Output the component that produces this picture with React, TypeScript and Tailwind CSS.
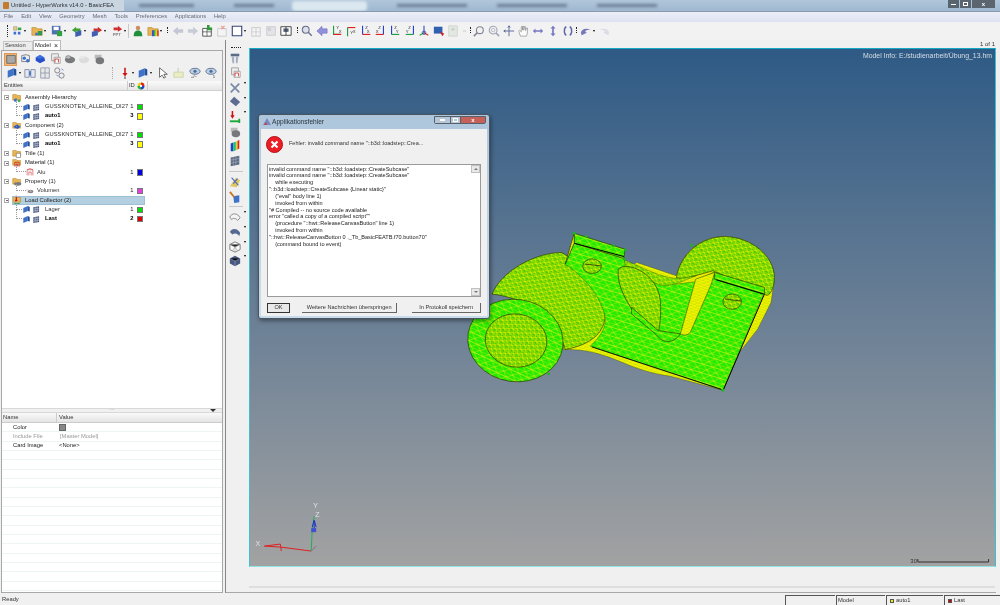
import type { ReactNode } from "react";

const shapes: Record<string, ReactNode> = {
  cube: (<><path d="M2 4.5 9 1.5v8L2 12.5z" fill="#3f72c8" /><path d="M9 1.5l3 1.5v7l-3-.5z" fill="#234f9c" /></>),
  mesh: (<><path d="M2 3.5 11 2v9l-9 1.5z" fill="#46557c" /><path d="M5 3v9M8 2.5v9M2 6.5l9-1.5M2 9.5l9-1.5" stroke="#d5dcec" strokeWidth=".8" /></>),
  asm: (<><path d="M1 2h5l1 1.5h5V10H1z" fill="#e9b452" stroke="#a87818" strokeWidth=".6" /><circle cx="5" cy="10" r="2.2" fill="#3a6fd0" /><circle cx="10" cy="11" r="2" fill="#37b04a" /></>),
  comp: (<><path d="M1 2h5l1 1.5h5V10H1z" fill="#e9b452" stroke="#a87818" strokeWidth=".6" /><path d="M2 8l5-3 5 3-5 3.5z" fill="#2958c8" /></>),
  title: (<><path d="M1 2h5l1 1.5h5V10H1z" fill="#e9b452" stroke="#a87818" strokeWidth=".6" /><path d="M6 6h6v6H6z" fill="#fff" stroke="#555" strokeWidth=".7" /></>),
  mat: (<><path d="M1 2h5l1 1.5h5V10H1z" fill="#e9b452" stroke="#a87818" strokeWidth=".6" /><path d="M4 12V6h6v6M6 12V9h2v3" fill="none" stroke="#c82020" strokeWidth="1.1" /></>),
  prop: (<><path d="M1 2h5l1 1.5h5V10H1z" fill="#e9b452" stroke="#a87818" strokeWidth=".6" /><ellipse cx="8" cy="9.5" rx="5" ry="2.6" fill="#77787c" /></>),
  load: (<><path d="M1 2h5l1 1.5h5V10H1z" fill="#e9b452" stroke="#a87818" strokeWidth=".6" /><path d="M6 1v8" stroke="#d00000" strokeWidth="1.6" /><path d="M4 7h4l-2 3z" fill="#d00000" /><path d="M3 12h8" stroke="#11a030" strokeWidth="1.2" /></>),
  alu: (<path d="M2 13V3h10v10M5 13V7h4v6M2 3l5-2 5 2" fill="none" stroke="#d04040" strokeWidth="1.1" />),
  vol: (<><ellipse cx="8" cy="8" rx="5" ry="3" fill="#808285" /><ellipse cx="8" cy="7" rx="2" ry="1" fill="#ddd" /><path d="M1 5h3M2 9h2" stroke="#c03030" strokeDasharray="1 1" /></>),
  wheel: (<><circle cx="7" cy="7" r="6" fill="#e0d020" /><path d="M7 7V1a6 6 0 0 1 6 6z" fill="#e02020" /><path d="M7 7h6a6 6 0 0 1-6 6z" fill="#2040e0" /><path d="M7 7v6a6 6 0 0 1-6-6z" fill="#20b040" /><circle cx="7" cy="7" r="2" fill="#fff" /></>),
  asmTool: (<><path d="M3 2h4v4H3z" fill="#e8d080" stroke="#777" strokeWidth=".5" /><path d="M3 8h3v3H3zM8 8h3v3H8z" fill="#3a6fd0" /><path d="M8 3h4v3H8z" fill="#35a84a" /></>),
  openTool: (<><path d="M1 3h5l1 1.5h6V12H1z" fill="#e9b452" stroke="#a87818" strokeWidth=".6" /><path d="M8 7h5v5H8z" fill="#2e9a4a" /><path d="M5 9h3v3H5z" fill="#3a6fd0" /></>),
  saveTool: (<><path d="M1 1h10v10H1z" fill="#4f6fb0" /><path d="M3 2h6v4H3z" fill="#fff" /><path d="M7 7h6v6H7z" fill="#30a040" /></>),
  arrowG: (<><path d="M1 6l5-4v2h5v3H6v2z" fill="#40a030" /><path d="M5 8l7-2v6l-7 2z" fill="#3f5fb0" /></>),
  arrowR: (<><path d="M13 6 8 2v2H3v3h5v2z" fill="#d03030" /><path d="M1 8l7-2v6l-7 2z" fill="#3f5fb0" /></>),
  ppt: (<><path d="M13 5 8 1v2H3v3h5v2z" fill="#d03030" /><text x="2" y="13" fontSize="5" fill="#444">PPT</text></>),
  user: (<><circle cx="7" cy="3.5" r="2.6" fill="#c89060" /><path d="M2 13c0-5 2-6.500 5-6.500s5 1.500 5 6.500z" fill="#1f8f3a" /></>),
  rainbow: (<><path d="M1 3h5l1 1.500h6V12H1z" fill="#e9b452" stroke="#a87818" strokeWidth=".6" /><path d="M6 6h2v7H6z" fill="#2040e0" /><path d="M8 6h2v7H8z" fill="#20c040" /><path d="M10 6h2v7h-2z" fill="#e8d020" /><path d="M12 6h1.500v7H12z" fill="#e02020" /></>),
  left: (<path d="M1 7l6-5v3h6v4H7v3z" fill="#c4c8d4" />),
  right: (<path d="M13 7 7 2v3H1v4h6v3z" fill="#c8ccd6" />),
  plusBox: (<><path d="M2 4h10v9H2z" fill="#fff" stroke="#444" /><path d="M7 4v9M2 8h10" stroke="#444" strokeWidth=".8" /><path d="M7 0h3v3h3v3H7z" fill="#2e9a38" /></>),
  grayBox: (<><path d="M2 3h10v10H2z" fill="#f2f2f2" stroke="#c8c8cc" /><path d="M7 3v10M2 8h10" stroke="#d0d0d4" /></>),
  redBox: (<><path d="M2 4h10v9H2z" fill="#f4f4f4" stroke="#c8c8cc" /><path d="M6 1l4 4M10 1 6 5" stroke="#e8a0a0" strokeWidth="1.400" /></>),
  white: (<path d="M1.500 1.500h11v11h-11z" fill="#fff" stroke="#39447a" strokeWidth="1.300" />),
  paneG: (<><path d="M2 2h10v10H2z" fill="#e4e4e8" stroke="#c8c8cc" /><path d="M3 3h4v4H3z" fill="#d0d0d4" /></>),
  book: (<><path d="M1 2h12v10H1z" fill="#fff" stroke="#333" /><path d="M4 4h6v4H4z" fill="#54607c" /><path d="M7 2v10" stroke="#333" /></>),
  zoomG: (<><circle cx="5.500" cy="5.500" r="4" fill="#dce0ea" stroke="#66708c" strokeWidth="1.200" /><path d="M8.500 8.500l4 4" stroke="#66708c" strokeWidth="1.600" /></>),
  purple: (<path d="M1 7l6-5.500v3h6v5H7v3z" fill="#9090dd" stroke="#6868b0" strokeWidth=".6" />),
  axGX: (<><path d="M3 1v10h8" fill="none" stroke="#1ca040" strokeWidth="1.300" /><path d="M3 11h9" stroke="#e02020" strokeWidth="1.300" /><text x="6" y="5" fontSize="5" fill="#333">Y</text><text x="9" y="9" fontSize="5" fill="#333">X</text></>),
  axRG: (<><path d="M3 3h9" stroke="#e02020" strokeWidth="1.300" /><path d="M3 3v10" stroke="#1ca040" strokeWidth="1.300" /><text x="6" y="10" fontSize="5" fill="#333">Y</text><text x="9" y="9" fontSize="5" fill="#333">X</text></>),
  axBR: (<><path d="M3 1v10" stroke="#2040e0" strokeWidth="1.300" /><path d="M3 11h9" stroke="#e02020" strokeWidth="1.300" /><text x="6" y="5" fontSize="5" fill="#333">Z</text><text x="8" y="9" fontSize="5" fill="#333">X</text></>),
  axRB: (<><path d="M11 1v10" stroke="#2040e0" strokeWidth="1.300" /><path d="M2 11h9" stroke="#e02020" strokeWidth="1.300" /><text x="5" y="5" fontSize="5" fill="#333">Z</text><text x="2" y="9" fontSize="5" fill="#333">X</text></>),
  axBG: (<><path d="M3 1v10" stroke="#2040e0" strokeWidth="1.300" /><path d="M3 11h9" stroke="#1ca040" strokeWidth="1.300" /><text x="6" y="5" fontSize="5" fill="#333">Z</text><text x="8" y="9" fontSize="5" fill="#333">Y</text></>),
  axGB: (<><path d="M11 1v10" stroke="#2040e0" strokeWidth="1.300" /><path d="M2 11h9" stroke="#1ca040" strokeWidth="1.300" /><text x="5" y="5" fontSize="5" fill="#333">Z</text><text x="2" y="9" fontSize="5" fill="#333">Y</text></>),
  triad: (<><path d="M7 1v9" stroke="#2040c0" strokeWidth="1.200" /><path d="M7 9 2 12" stroke="#1ca040" strokeWidth="1.200" /><path d="M7 9l5 3" stroke="#e02020" strokeWidth="1.200" /><circle cx="7" cy="9" r="2" fill="none" stroke="#3050a0" /></>),
  screen: (<><path d="M1 2h10v8H1z" fill="#3060b0" /><path d="M8 8l5 2-2 3z" fill="#d02020" /></>),
  personG: (<><path d="M2 1h10v12H2z" fill="#e4e8e4" stroke="#cfd2cf" /><circle cx="7" cy="5" r="2" fill="#c8d8c8" /></>),
  magCross: (<><circle cx="8" cy="6" r="4" fill="#f2f2f2" stroke="#808494" strokeWidth="1.300" /><path d="M5 9l-4 4" stroke="#808494" strokeWidth="1.800" /></>),
  magCross2: (<><circle cx="6" cy="6" r="4.500" fill="#f2f2f2" stroke="#a0a4b4" strokeWidth="1.300" /><circle cx="6" cy="6" r="2" fill="none" stroke="#b0b4c0" /><path d="M9 9l4 4" stroke="#a0a4b4" strokeWidth="1.800" /></>),
  move: (<path d="M7 1v12M1 7h12M7 1 5.500 3M7 1l1.500 2M1 7l2-1.500M1 7l2 1.500" fill="none" stroke="#5a6a9a" strokeWidth="1.100" />),
  hand: (<path d="M4 13 2 7l1-1 2 2V2h1.500v4V1.500H8V6l.5-4H10v4.500l1-3h1.200L12 10l-1 3z" fill="#fbfbfb" stroke="#8b8b8b" strokeWidth=".8" />),
  panH: (<path d="M1 7l3-3v2h6V4l3 3-3 3V8H4v2z" fill="#7878c4" />),
  panV: (<path d="M7 1l3 3H8v6h2l-3 3-3-3h2V4H4z" fill="#7878c4" />),
  rot: (<path d="M5 2C2 3 2 11 5 12M9 2c3 1 3 9 0 10" fill="none" stroke="#6068a8" strokeWidth="1.700" />),
  undo: (<path d="M1 9c1-5 7-6 12-3-4-1-6 0-7 2l2 1-6 3z" fill="#7878b8" />),
  redo: (<path d="M13 9C12 4 6 3 1 6c4-1 6 0 7 2L6 9l6 3z" fill="#dcdce8" />),
  eyePm: (<><ellipse cx="7" cy="5" rx="6" ry="3.500" fill="#bcd0e4" stroke="#5a6a8a" /><circle cx="7" cy="5" r="1.800" fill="#4a6a9a" /><text x="2" y="13" fontSize="5" fill="#333">+/−</text></>),
  eye1: (<><ellipse cx="7" cy="5" rx="6" ry="3.500" fill="#bcd0e4" stroke="#5a6a8a" /><circle cx="7" cy="5" r="1.800" fill="#4a6a9a" /><text x="9" y="13" fontSize="5" fill="#333">1</text></>),
  solid: (<path d="M1 2h12v11H1z" fill="#a8a8a8" stroke="#555" />),
  gear1: (<><path d="M2 3l5-1 4 1v7H2z" fill="#eee" stroke="#777" /><circle cx="5" cy="6" r="2" fill="#3a6fd0" /><circle cx="9" cy="9" r="2" fill="#3a6fd0" /></>),
  bluePlate: (<><path d="M2 5h10l1 4-6 3-5-3z" fill="#264fc8" /><path d="M7 2l5 3-5 2-5-2z" fill="#3a6fe0" /></>),
  comps: (<><path d="M3 1h8v8H3z" fill="#eee" stroke="#999" /><path d="M6 5h7v7H6z" fill="#fff" stroke="#999" /><path d="M7 11V7h4v4" fill="none" stroke="#d03030" /></>),
  gearsA: (<><ellipse cx="7" cy="8" rx="6" ry="4" fill="#787a7e" /><ellipse cx="5" cy="5" rx="3" ry="2" fill="#bbb" stroke="#555" strokeWidth=".5" /></>),
  gearsB: (<><ellipse cx="7" cy="8" rx="6" ry="4" fill="#dcdcdc" /><ellipse cx="5" cy="5" rx="3" ry="2" fill="#e8e8e8" /></>),
  gearsC: (<><path d="M2 2h8v5H2z" fill="#bbb" /><ellipse cx="8" cy="9" rx="5" ry="4" fill="#77787c" /></>),
  arrowDown: (<><path d="M7 1v7" stroke="#d01010" strokeWidth="1.800" /><path d="M4 7h6l-3 4z" fill="#d01010" /><path d="M7 11v3" stroke="#222" strokeWidth="1" /></>),
  cursor: (<path d="M3 1v11l3-2.500L8 13l2-1-2-3.500h4z" fill="#fff" stroke="#555" />),
  note: (<><path d="M1 6h11v6H1z" fill="#e8eec0" stroke="#cdd2b0" /><path d="M6 1v5" stroke="#c0c8a0" /></>),
  row1: (<><path d="M1 3h5v9H1zM8 3h5v9H8z" fill="#e8e8ec" stroke="#7a8aaa" /><path d="M6 5h2v5H6z" fill="#3f72c8" /></>),
  row2: (<><path d="M2 1h10v12H2z" fill="#e8e8ec" stroke="#9098a8" /><path d="M7 1v12M2 7h10" stroke="#9098a8" /></>),
  row3: (<><circle cx="5" cy="4" r="3" fill="#eee" stroke="#778" /><circle cx="10" cy="10" r="3" fill="#eee" stroke="#778" /><path d="M4 9l2 2M10 2l2 2" stroke="#3f72c8" /></>),
  vFrame: (<><path d="M2 2h10v3H2z" fill="#5a6a88" /><path d="M3 5l1 8h2V5zM8 5v8h2l1-8z" fill="#a8b0c0" /></>),
  vX: (<path d="M2 2l10 10M12 2 2 12" stroke="#7a8aa8" strokeWidth="2" />),
  vPlate: (<path d="M1 6l5-5 7 6-5 5z" fill="#5b6d90" />),
  vLoad: (<><path d="M4 0v7" stroke="#d01010" strokeWidth="1.800" /><path d="M1.500 5h5L4 9z" fill="#d01010" /><path d="M1 12h12" stroke="#1aa838" strokeWidth="2.200" /><path d="M12 9v5" stroke="#1aa838" strokeWidth="2" /></>),
  vHeat: (<><path d="M2 4l3-1v10H2z" fill="#2040d0" /><path d="M5 3l3-1v10l-3 1z" fill="#18c070" /><path d="M8 2l2-1v10l-2 1z" fill="#e0d020" /><path d="M10 1l2-1v10l-2 1z" fill="#e02020" /></>),
  vGrid: (<><path d="M2 3l10-2v10L2 13z" fill="#5a6a80" /><path d="M5 2.500V12M8 2v10M2 6l10-2M2 9.500l10-2" stroke="#a8b0c0" strokeWidth=".7" /></>),
  vCheck: (<><path d="M1 12 8 2l5 3-4 8z" fill="#e0c860" /><path d="M3 2l8 9M10 3 5 9" stroke="#4a6ac0" strokeWidth="1.300" /></>),
  vBrush: (<><path d="M5 6l7-1v8l-6 1z" fill="#3f72c8" /><path d="M1 1l5 6" stroke="#c87820" strokeWidth="2.200" /></>),
  vCurve: (<path d="M1 7c2-5 9-5 12 1l-3 3C8 8 5 8 3 10z" fill="#f4f4f4" stroke="#808080" />),
  vSurf: (<path d="M1 7c2-5 9-5 12 1l-1 4c-2-4-6-4-8-2z" fill="#556a90" />),
  vWire: (<><path d="M7 1l6 3v6l-6 3-6-3V4z" fill="#fafafa" stroke="#707070" /><path d="M1 4l6 3 6-3M7 7v6M4 2.500 10 11.500M10 2.500 4 11.500" stroke="#909090" strokeWidth=".6" /></>),
  vSolid: (<><path d="M7 1l6 3v6l-6 3-6-3V4z" fill="#46557f" /><path d="M1 4l6 3 6-3M7 7v6" stroke="#a0a8c8" strokeWidth=".7" /></>),
};

function Icon({ n, s = 12 }: { n: string; s?: number }) {
  return (
    <svg width={s} height={s} viewBox="0 0 14 14" className="shrink-0" fontFamily="'Liberation Sans',sans-serif">
      {shapes[n]}
    </svg>
  );
}

const Drop = () => <span className="w-0 h-0 border-x-[1.5px] border-t-2 border-x-transparent border-t-black mx-[1px] shrink-0" />;
const Dots = () => <span className="h-[12px] border-l border-dotted border-[#222] shrink-0" />;

const treeRows = [
  { kind: "head", icon: "asm", label: "Assembly Hierarchy" },
  { kind: "comp", label: "GUSSKNOTEN_ALLEINE_DI27", id: "1", color: "bg-[#00e000]" },
  { kind: "comp", label: "auto1", id: "3", color: "bg-[#ffff00]", bold: true },
  { kind: "head", icon: "comp", label: "Component (2)" },
  { kind: "comp", label: "GUSSKNOTEN_ALLEINE_DI27", id: "1", color: "bg-[#00e000]" },
  { kind: "comp", label: "auto1", id: "3", color: "bg-[#ffff00]", bold: true },
  { kind: "head", icon: "title", label: "Title (1)" },
  { kind: "head", icon: "mat", label: "Material (1)" },
  { kind: "leaf", icon: "alu", label: "Alu", id: "1", color: "bg-[#0000e0]" },
  { kind: "head", icon: "prop", label: "Property (1)" },
  { kind: "leaf", icon: "vol", label: "Volumen", id: "1", color: "bg-[#e040e0]" },
  { kind: "head", icon: "load", label: "Load Collector (2)", selected: true },
  { kind: "comp", label: "Lager", id: "1", color: "bg-[#00e000]" },
  { kind: "comp", label: "Last", id: "2", color: "bg-[#e00000]", bold: true },
];

function TreeRow({ row }: { row: (typeof treeRows)[number] }) {
  return (
    <div className="h-[9.35px] flex items-center relative">
      {row.kind === "head" ? (
        <>
          <span className="ml-[2px] w-[5px] h-[5px] border border-[#aaa] bg-white relative shrink-0">
            <span className="absolute left-[0.5px] top-[1px] w-[2px] h-px bg-[#666]" />
          </span>
          <span className={`ml-[3px] h-[9.35px] w-[133px] flex items-center shrink-0 ${row.selected ? "bg-[#b4cfe0] outline outline-[#9fc0d4] -outline-offset-1" : ""}`}>
            <Icon n={row.icon!} s={10} />
            <span className="ml-[3px]">{row.label}</span>
          </span>
        </>
      ) : row.kind === "comp" ? (
        <>
          <span className="ml-[14px] w-[6px] h-[9px] -mt-[9px] border-l border-b border-dotted border-[#999] shrink-0" />
          <Icon n="cube" s={9} />
          <span className="ml-[1px]"><Icon n="mesh" s={9} /></span>
          <span className={`ml-[4px] text-[#333] ${row.bold ? "font-bold text-black" : ""}`}>{row.label}</span>
        </>
      ) : (
        <>
          <span className="ml-[14px] w-[10px] h-[9px] -mt-[9px] border-l border-b border-dotted border-[#999] shrink-0" />
          <Icon n={row.icon!} s={8} />
          <span className="ml-[3px] text-[#333]">{row.label}</span>
        </>
      )}
      {row.id && (
        <span className="absolute left-0 top-0 h-full w-[141px] flex items-center justify-end gap-[3px]">
          <span className={row.bold ? "font-bold text-black" : "text-[#222]"}>{row.id}</span>
          <span className={`w-[6.5px] h-[6.5px] border border-[#777] ${row.color}`} />
        </span>
      )}
    </div>
  );
}

const mainTools: string[] = ["asmTool", "openTool", "saveTool", "arrowG", "arrowR", "ppt"];
const axes: string[] = ["axGX", "axRG", "axBR", "axRB", "axBG", "axGB", "triad", "screen"];
const vTools = ["vFrame", "comps", "vX", "vPlate", "vLoad", "gearsC", "vHeat", "vGrid", "sep", "vCheck", "vBrush", "sep", "vCurve", "vSurf", "vWire", "vSolid"];
const vDrop = ["vX", "vPlate", "vLoad", "vCurve", "vSurf", "vWire", "vSolid"];

const errorText = [
  'invalid command name "::b3d::loadstep::CreateSubcase"',
  'invalid command name "::b3d::loadstep::CreateSubcase"',
  "    while executing",
  '"::b3d::loadstep::CreateSubcase {Linear static}"',
  '    ("eval" body line 1)',
  "    invoked from within",
  '"# Compiled -- no source code available',
  'error "called a copy of a compiled script""',
  '    (procedure "::hwt::ReleaseCanvasButton" line 1)',
  "    invoked from within",
  '"::hwt::ReleaseCanvasButton 0 ._Tb_BasicFEATB.f70.button70"',
  "    (command bound to event)",
];

function Part() {
  return (
    <svg viewBox="250 49 745 519" className="absolute inset-0 w-full h-full">
      <defs>
        <pattern id="tri" width="30" height="26" patternUnits="userSpaceOnUse" patternTransform="rotate(17)">
          <rect width="30" height="26" fill="#22ea00" />
          <path d="M0 0h30M0 13h30M0 0l15 13L30 0M0 26l15-13 15 13" stroke="#d4f010" strokeWidth="2" fill="none" />
        </pattern>
        <pattern id="dense" width="20" height="16" patternUnits="userSpaceOnUse" patternTransform="rotate(32)">
          <rect width="20" height="16" fill="#4cc800" />
          <path d="M0 0h20M0 8h20M0 0l20 16M20 0 0 16" stroke="#f6f600" strokeWidth="2" fill="none" />
        </pattern>
        <pattern id="yel" width="12" height="10" patternUnits="userSpaceOnUse" patternTransform="rotate(-20)">
          <rect width="12" height="10" fill="#eef400" />
          <path d="M0 0h12M0 0l12 10" stroke="#a8c800" strokeWidth="1.200" />
        </pattern>
      </defs>
      <g transform="translate(450 220) scale(0.3333)" stroke="#2a3800" strokeWidth="2" strokeLinejoin="round">
        {/* underside and right lobe */}
        <path d="M340 392 C400 392 440 398 520 432 C560 450 620 468 660 472 L820 515 L870 400 L925 330 L965 250 L975 180 C965 100 905 55 825 52 C750 52 695 105 680 170 L560 130 L420 230 L340 300Z" fill="url(#yel)" strokeWidth="1" />
        <path d="M680 175 C690 110 750 50 830 52 C905 55 975 110 975 175 C975 205 960 240 945 225 L790 155 L700 180Z" fill="url(#dense)" />
        <path d="M522 122 C580 145 640 180 690 178 L740 170 L640 210 L530 170Z" fill="url(#dense)" strokeWidth="1" />
        {/* left cylinder */}
        <path d="M125 225 C150 160 250 100 335 100 C420 150 465 235 465 295 C460 345 420 378 345 392 C320 300 240 240 125 225Z" fill="url(#dense)" />
        {/* plate */}
        <path d="M345 135 L372 72 L522 118 L530 165 L640 200 L735 188 L790 160 L945 218 L820 515 L420 382 C455 350 470 320 465 290 C450 230 400 170 345 135Z" fill="url(#tri)" strokeWidth="1" />
        {/* tab */}
        <path d="M372 42 L525 90 L522 118 L372 72Z" fill="url(#tri)" />
        <path d="M372 42 L345 135 L372 72Z" fill="url(#yel)" />
        <path d="M372 72 L522 112" stroke="#000" strokeWidth="3" fill="none" />
        <path d="M795 160 L945 205 L945 225 L795 180Z" fill="url(#tri)" />
        <path d="M800 182 L942 225" stroke="#000" strokeWidth="3" fill="none" />
        <path d="M945 225 L822 512" stroke="#000" strokeWidth="3" fill="none" />
        <path d="M425 384 L815 512" stroke="#111" strokeWidth="3" fill="none" />
        {/* holes */}
        <ellipse cx="426" cy="141" rx="28" ry="22" fill="url(#dense)" />
        <path d="M405 135 L452 140" stroke="#111" fill="none" />
        <ellipse cx="848" cy="248" rx="28" ry="23" fill="url(#dense)" />
        <path d="M826 240 L875 246" stroke="#111" fill="none" />
        {/* cut-out */}
        <path d="M505 150 C530 125 610 160 628 225 C640 280 625 345 625 345 L545 270 C520 230 500 190 505 150Z" fill="url(#dense)" />
        <path d="M545 265 L625 335 L692 345 C670 375 640 375 620 348 L545 285Z" fill="url(#tri)" />
        <path d="M692 345 L738 180 L795 160 L785 195 L722 340 C715 350 700 350 692 345Z" fill="url(#yel)" strokeWidth="1.500" />
        {/* end disc */}
        <ellipse cx="195" cy="365" rx="144" ry="124" transform="rotate(8 195 365)" fill="url(#tri)" />
        <ellipse cx="197" cy="365" rx="93" ry="80" transform="rotate(8 197 365)" fill="url(#dense)" />
        <g fill="#10c010" stroke="none">
          <circle cx="372" cy="42" r="4" /><circle cx="408" cy="52" r="4" /><circle cx="490" cy="80" r="4" /><circle cx="525" cy="92" r="4" /><circle cx="522" cy="120" r="4" /><circle cx="726" cy="78" r="4" /><circle cx="820" cy="515" r="4" /><circle cx="295" cy="465" r="4" />
        </g>
      </g>
      {/* triad */}
      <g fill="none" strokeWidth="1">
        <path d="M310 553 L279 549 L263 548 L279 546 L280 553" stroke="#e02020" />
        <path d="M310 553 L315 548" stroke="#8a6a8a" />
        <path d="M310 553 L311 532 L313 518" stroke="#20b050" />
        <path d="M313 533 V523 M311 529 L313 522 L315 529" stroke="#2030d0" />
        <rect x="310" y="530" width="5" height="4" fill="#4050d0" stroke="none" />
      </g>
      <g fontFamily="'Liberation Sans',sans-serif" fontSize="7" fill="#dfe4e8">
        <text x="254" y="548">X</text>
        <text x="314" y="519">Z</text>
        <text x="312" y="510">Y</text>
      </g>
      <path d="M919 561v3h71v-3" fill="none" stroke="#333" strokeWidth="1" />
    </svg>
  );
}

export default function App() {
  return (
    <div className="w-[1000px] h-[605px] flex flex-col overflow-hidden bg-[#f0f0f0] text-[5.8px] leading-none text-[#222] blur-[0.35px]" style={{ fontFamily: "'Liberation Sans', Arial, sans-serif" }}>
      {/* window title bar */}
      <div className="h-[12px] shrink-0 flex items-center bg-gradient-to-b from-[#b0c6da] to-[#9fb8d0] border-b border-[#8a9bab] relative overflow-hidden">
        <div className="w-[124px] h-full flex items-center pl-[3px] bg-[#c9d5e0] shrink-0 whitespace-nowrap">
          <span className="w-[6px] h-[7px] bg-[#c47a30] rounded-[1px]" />
          <span className="ml-[2px] text-[#2c3238] text-[5.8px]">Untitled - HyperWorks v14.0 - BasicFEA</span>
        </div>
        <div className="flex items-center h-full flex-1 blur-[1.5px]">
          <span className="ml-[15px] w-[55px] h-[3px] bg-[#6b7f94]" />
          <span className="ml-[40px] w-[40px] h-[3px] bg-[#6b7f94]" />
          <span className="ml-[18px] w-[75px] h-[10px] bg-[#dce8f0] rounded-[3px]" />
          <span className="ml-[30px] w-[70px] h-[3px] bg-[#6b7f94]" />
          <span className="ml-[30px] w-[70px] h-[3px] bg-[#6b7f94]" />
          <span className="ml-[30px] w-[60px] h-[3px] bg-[#6b7f94]" />
        </div>
        <div className="flex h-[8px] self-start items-stretch mr-[5px] gap-px">
          <span className="w-[11px] bg-[#58656f] flex items-center justify-center"><span className="w-[5px] h-px bg-white" /></span>
          <span className="w-[11px] bg-[#58656f] flex items-center justify-center"><span className="w-[5px] h-[4px] border border-white" /></span>
          <span className="w-[23px] bg-[#5a6570] text-white flex items-center justify-center text-[6px] font-bold">x</span>
        </div>
      </div>
      {/* menu */}
      <div className="h-[10px] shrink-0 flex items-center pl-[4px] gap-[7.8px] bg-gradient-to-b from-[#eceff8] to-[#dde2f2] text-[#666b75] text-[5.8px]">
        {["File", "Edit", "View", "Geometry", "Mesh", "Tools", "Preferences", "Applications", "Help"].map((m) => (
          <span key={m}>{m}</span>
        ))}
      </div>
      {/* main toolbar */}
      <div className="h-[18px] shrink-0 flex items-center pl-[7px] bg-[#f2f2f2]">
        <Dots />
        {mainTools.map((n) => (
          <span key={n} className="w-[20px] flex items-center justify-end pr-[1px]"><Icon n={n} /><Drop /></span>
        ))}
        <span className="h-[14px] border-l border-[#c8c8c8]" />
        <span className="ml-[3px]"><Icon n="user" /></span>
        <span className="ml-[3px] flex items-center"><Icon n="rainbow" /><Drop /></span>
        <span className="ml-[4px]"><Dots /></span>
        <div className="ml-[4px] flex items-center gap-[2.700px]">
          <Icon n="left" /><Icon n="right" /><Icon n="plusBox" /><Icon n="redBox" />
          <span className="flex items-center"><Icon n="white" /><Drop /></span>
          <span className="ml-[1px] flex gap-[3px]"><Icon n="grayBox" /><Icon n="paneG" /><Icon n="book" /></span>
        </div>
        <span className="ml-[5px]"><Dots /></span>
        <div className="ml-[3px] flex items-center gap-[2.600px]">
          <Icon n="zoomG" /><Icon n="purple" />
          {axes.map((n) => <Icon key={n} n={n} />)}
          <Icon n="personG" />
        </div>
        <span className="ml-[4px] w-[3px] h-[2px] bg-[#ddd]" />
        <span className="ml-[4px]"><Dots /></span>
        <div className="ml-[2px] flex items-center gap-[2.700px]">
          <Icon n="magCross" /><Icon n="magCross2" /><Icon n="move" /><Icon n="hand" /><Icon n="panH" /><Icon n="panV" /><Icon n="rot" />
        </div>
        <span className="ml-[2px]"><Dots /></span>
        <span className="ml-[3px] flex items-center"><Icon n="undo" /><Drop /></span>
        <span className="ml-[2px] flex items-center"><Icon n="redo" /></span>
      </div>

      <div className="flex-1 min-h-0 flex relative">
        {/* left browser panel */}
        <div className="w-[225px] shrink-0 flex flex-col pl-[1px] pr-[2px] pb-[1px]">
          <div className="h-[10px] shrink-0 flex items-end pl-[2px] text-[5.8px]">
            <span className="h-[9px] w-[30px] bg-[#ececec] border border-b-0 border-[#c8c8c8] flex items-center pl-[1px] text-[#444]">Session</span>
            <span className="h-[10px] w-[28px] bg-white border border-b-0 border-[#bbb] flex items-center justify-between px-[1px]">Model <span className="text-[7px] mr-[1px]">×</span></span>
          </div>
          <div className="flex-1 min-h-0 flex flex-col border border-[#a8a8a8] bg-white">
            <div className="h-[30px] shrink-0 bg-[#f0f0f0] pt-[1px]">
              <div className="h-[14px] flex items-center pl-[2px] gap-[2.700px]">
                <span className="w-[13px] h-[13px] bg-[#f0b878] border border-[#e09858] flex items-center justify-center"><Icon n="solid" s={10} /></span>
                <Icon n="gear1" /><Icon n="bluePlate" /><Icon n="comps" /><Icon n="gearsA" /><Icon n="gearsB" /><Icon n="gearsC" />
              </div>
              <div className="h-[14px] flex items-center pl-[4px]">
                <Icon n="cube" /><Drop />
                <span className="ml-[2px] flex gap-[2.500px]"><Icon n="row1" /><Icon n="row2" /><Icon n="row3" /></span>
                <span className="ml-[47px] h-[12px] border-l border-dotted border-[#aaa]" />
                <span className="ml-[6px]"><Icon n="arrowDown" /></span><Drop />
                <span className="ml-[2px]"><Icon n="cube" /></span><Drop />
                <span className="ml-[4px]"><Icon n="cursor" /></span>
                <span className="ml-[4px]"><Icon n="note" /></span>
                <span className="ml-[4px]"><Icon n="eyePm" /></span>
                <span className="ml-[4px]"><Icon n="eye1" /></span>
              </div>
            </div>
            <div className="h-[10px] shrink-0 flex items-center bg-gradient-to-b from-[#fafafa] to-[#e6e6e6] border-b border-[#d0d0d0] text-[#333]">
              <span className="w-[126px] pl-[2px] border-r border-[#ccc] h-full flex items-center">Entities</span>
              <span className="ml-[1px]">ID</span>
              <span className="ml-[2px]"><Icon n="wheel" s={8} /></span>
              <span className="ml-[2px] h-full border-r border-[#ccc]" />
            </div>
            <div className="h-[317px] shrink-0 pt-[2px]">
              {treeRows.map((r, i) => <TreeRow key={i} row={r} />)}
            </div>
            <div className="h-[5px] shrink-0 relative flex items-center justify-center bg-[#f0f0f0] border-y border-[#d8d8d8]">
              <span className="text-[5px] text-[#777] -mt-[2px]">···</span>
              <span className="absolute right-[6px] top-0 w-0 h-0 border-x-[3px] border-t-[3px] border-x-transparent border-t-[#333]" />
            </div>
            <div className="h-[10px] shrink-0 flex items-center bg-gradient-to-b from-[#fafafa] to-[#e4e4e4] border-b border-[#ccc] text-[#333]">
              <span className="w-[55px] pl-[1px] h-full flex items-center border-r border-[#ccc]">Name</span>
              <span className="pl-[2px]">Value</span>
            </div>
            <div className="flex-1 min-h-0 bg-[repeating-linear-gradient(to_bottom,#ffffff_0,#ffffff_8.3px,#eef4f4_8.3px,#eef4f4_9.33px)]">
              <div className="h-[9.33px] flex items-center"><span className="w-[55px] pl-[11px]">Color</span><span className="ml-[2px] w-[7px] h-[7px] bg-[#888] border border-[#666]" /></div>
              <div className="h-[9.33px] flex items-center text-[#999]"><span className="w-[55px] pl-[11px]">Include File</span><span className="ml-[3px]">[Master Model]</span></div>
              <div className="h-[9.33px] flex items-center"><span className="w-[55px] pl-[11px]">Card Image</span><span className="ml-[2px]">&lt;None&gt;</span></div>
            </div>
          </div>
        </div>

        {/* tools, graphics area and the strip below them */}
        <div className="flex-1 min-w-0 flex flex-col border-l border-[#888] h-[553px]">
          <div className="flex">
            <div className="w-[23px] shrink-0 flex flex-col items-start pl-[3px] pt-[7px]">
              <span className="w-[10px] border-t border-dotted border-[#222] ml-[2px] mb-[3px]" />
              {vTools.map((n, i) =>
                n === "sep" ? (
                  <span key={i} className="w-[14px] border-t border-[#c8c8c8] my-[2.500px]" />
                ) : (
                  <span key={i} className="h-[14.700px] flex items-center">
                    <Icon n={n} />
                    {vDrop.includes(n) && <span className="ml-[2px]"><Drop /></span>}
                  </span>
                )
              )}
            </div>
            <div className="flex-1 min-w-0 flex flex-col pr-[4px]">
              <div className="h-[8px] shrink-0 flex items-center justify-end text-[6px] pr-[1px] text-[#333]">1 of 1</div>
              <div className="h-[519px] shrink-0 relative border border-t-[#12a8c4] border-x-[#3cc0d0] border-b-[#90e4e4] bg-gradient-to-b from-[#2e5a85] to-[#a2a2a2]">
                <Part />
                <span className="absolute right-[3px] top-[4px] text-[#d8dfe6] text-[6.9px]">Model Info: E:/studienarbeit/Übung_13.hm</span>
                <span className="absolute right-[78px] bottom-[2px] text-[#333] text-[6px]">30</span>
              </div>
            </div>
          </div>
          <div className="mt-auto mr-[5px] ml-[23px] border-t-2 border-[#dedede] mb-[4px]" />
          <div className="border-t border-[#a8a8a8] mr-[4px]" />
        </div>

        {/* error dialog */}
        <div className="absolute left-[258px] top-[74px] w-[232px] h-[205px] flex flex-col rounded-[3px] border border-[#4a5560] bg-gradient-to-b from-[#aec6dc] to-[#c8dbea] shadow-[1px_2px_4px_rgba(0,0,0,0.4)]">
          <div className="h-[14px] shrink-0 flex items-center pl-[4px]">
            <svg width="8" height="8" viewBox="0 0 8 8"><path d="M4 0l4 7H0z" fill="#7a88c0" /><path d="M1 7l2-3 1 3z" fill="#c84040" /></svg>
            <span className="ml-[1px] text-[6.600px] text-[#2a3440]">Applikationsfehler</span>
            <span className="ml-auto mr-[3px] self-start flex h-[8px] mt-[1px] border border-[#55626e] rounded-b-[2px]">
              <span className="w-[15px] bg-[#b6c8d8] flex items-center justify-center"><span className="w-[5px] h-[1.5px] bg-white" /></span>
              <span className="w-[11px] bg-[#b6c8d8] flex items-center justify-center border-x border-[#55626e]"><span className="w-[5px] h-[4px] border border-white" /></span>
              <span className="w-[24px] bg-[#c8605a] text-white flex items-center justify-center text-[6px] font-bold">x</span>
            </span>
          </div>
          <div className="flex-1 min-h-0 mx-[2px] mb-[2px] bg-[#f0f0f0] flex flex-col px-[6px]">
            <div className="h-[30px] shrink-0 flex items-center">
              <svg width="17" height="17" viewBox="0 0 17 17" className="-ml-[1px]">
                <circle cx="8.500" cy="8.500" r="8" fill="#ee1c25" stroke="#b01018" />
                <path d="M5.500 5.500l6 6M11.500 5.500l-6 6" stroke="#fff" strokeWidth="2.200" />
              </svg>
              <span className="ml-[6px] text-[#333] text-[5.500px]">Fehler: invalid command name "::b3d::loadstep::Crea...</span>
            </div>
            <div className="h-[133px] shrink-0 mt-[5px] border border-[#9a9a9a] bg-white relative pl-[1px] pt-[1px] text-[#222] text-[5.550px] whitespace-pre">
              {errorText.map((l, i) => (
                <div key={i} className="h-[6.830px] flex items-center">{l}</div>
              ))}
              <span className="absolute right-0 top-0 bottom-0 w-[9px] flex flex-col justify-between bg-white">
                <span className="h-[8px] bg-[#e8e8e8] border border-[#c0c0c0] flex items-center justify-center"><span className="w-0 h-0 border-x-2 border-b-2 border-x-transparent border-b-[#777]" /></span>
                <span className="h-[8px] bg-[#e8e8e8] border border-[#c0c0c0] flex items-center justify-center"><span className="w-0 h-0 border-x-2 border-t-2 border-x-transparent border-t-[#777]" /></span>
              </span>
            </div>
            <div className="mt-[6px] flex text-[#333] text-[5.600px]">
              <span className="w-[23px] h-[10px] border border-[#333] bg-[#e8e8e8] flex items-center justify-center">OK</span>
              <span className="ml-[12px] w-[96px] h-[10px] border-r border-b border-[#666] bg-[#f0f0f0] flex items-center justify-center">Weitere Nachrichten überspringen</span>
              <span className="ml-[15px] w-[69px] h-[10px] border-r border-b border-[#666] bg-[#f0f0f0] flex items-center justify-center">In Protokoll speichern</span>
            </div>
          </div>
        </div>
      </div>

      {/* status bar */}
      <div className="h-[11px] shrink-0 flex items-end bg-[#f0f0f0] text-[5.800px] text-[#333]">
        <span className="pl-[2px] w-[785px] h-[10px] flex items-center">Ready</span>
        <span className="w-[50px] h-[10px] border-t border-l border-[#555]" />
        <span className="ml-[1px] w-[49px] h-[10px] border-t border-l border-[#555] flex items-center pl-[1px]">Model</span>
        <span className="ml-[1px] w-[57px] h-[10px] border-t border-l border-[#555] flex items-center pl-[3px] gap-[2px]"><span className="w-[4px] h-[4px] bg-[#f0f000] border border-[#555]" />auto1</span>
        <span className="ml-[1px] flex-1 h-[10px] border-t border-l border-[#555] flex items-center pl-[3px] gap-[2px]"><span className="w-[4px] h-[4px] bg-[#d00000] border border-[#555]" />Last</span>
      </div>
    </div>
  );
}
